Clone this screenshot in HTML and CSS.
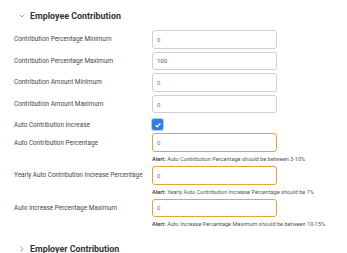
FILE: index.html
```html
<!DOCTYPE html>
<html>
<head>
<meta charset="utf-8">
<link rel="stylesheet" href="styles.css">
</head>
<body>
<div class="page">
  <div class="section-head">
    <svg class="chev" width="6" height="4" viewBox="0 0 6 4"><path d="M0.6 0.6 L3 3 L5.4 0.6" fill="none" stroke="#9aa0a6" stroke-width="0.9"/></svg>
    <span class="title">Employee Contribution</span>
  </div>
  <div class="form">
    <div class="row">
      <label class="label">Contribution Percentage Minimum</label>
      <div class="field"><div class="input">0</div></div>
    </div>
    <div class="row">
      <label class="label">Contribution Percentage Maximum</label>
      <div class="field"><div class="input dark">100</div></div>
    </div>
    <div class="row">
      <label class="label">Contribution Amount Minimum</label>
      <div class="field"><div class="input">0</div></div>
    </div>
    <div class="row">
      <label class="label">Contribution Amount Maximum</label>
      <div class="field"><div class="input">0</div></div>
    </div>
    <div class="row check-row">
      <label class="label">Auto Contribution Increase</label>
      <div class="field">
        <span class="checkbox"><svg width="8" height="8" viewBox="0 0 8 8"><path d="M1.6 4.2 L3.3 5.8 L6.5 2.2" fill="none" stroke="#fff" stroke-width="1.2"/></svg></span>
      </div>
    </div>
    <div class="row">
      <label class="label">Auto Contribution Percentage</label>
      <div class="field"><div class="input warn">0</div></div>
    </div>
    <div class="alert"><b>Alert:</b> Auto Contribution Percentage should be between 3-10%</div>
    <div class="row">
      <label class="label">Yearly Auto Contribution Increase Percentage</label>
      <div class="field"><div class="input warn">0</div></div>
    </div>
    <div class="alert"><b>Alert:</b> Yearly Auto Contribution Increase Percentage should be 1%</div>
    <div class="row">
      <label class="label">Auto Increase Percentage Maximum</label>
      <div class="field"><div class="input warn">0</div></div>
    </div>
    <div class="alert"><b>Alert:</b> Auto Increase Percentage Maximum should be between 10-15%</div>
  </div>
  <div class="section-head second">
    <svg class="chev" width="4" height="6" viewBox="0 0 4 6"><path d="M0.6 0.6 L3 3 L0.6 5.4" fill="none" stroke="#9aa0a6" stroke-width="0.9"/></svg>
    <span class="title">Employer Contribution</span>
  </div>
</div>
</body>
</html>
```
FILE: styles.css
```css
* { box-sizing: border-box; }
body {
  margin: 0;
  background: #fff;
  font-family: Roboto, "Liberation Sans", sans-serif;
  color: #444;
}
.page {
  padding: 9px 0 0 14px;
  width: 347px;
}
.section-head {
  display: flex;
  align-items: center;
  height: 14px;
  padding-left: 5px;
}
.chev { flex: none; }
.section-head .title {
  margin-left: 5px;
  font-size: 8.9px;
  font-weight: 700;
  color: #333;
}
.section-head.second {
  margin-top: 11px;
  padding-left: 6px;
}
.section-head.second .title { margin-left: 6px; }
.form {
  display: flex;
  flex-direction: column;
  margin-top: 7px;
}
.row {
  display: grid;
  grid-template-columns: 138px 125px;
  align-items: center;
  margin-bottom: 3px;
}
.label {
  font-size: 6.4px;
  color: #484848;
}
.input {
  height: 18.6px;
  border: 1px solid #cfcfcf;
  border-radius: 3px;
  padding-left: 4px;
  display: flex;
  align-items: center;
  font-size: 6px;
  color: #777;
}
.input.dark { color: #555; }
.input.warn { border-color: #e6a33c; }
.check-row { margin-top: 3px; margin-bottom: 3px; }
.checkbox {
  display: flex;
  align-items: center;
  justify-content: center;
  width: 11px;
  height: 11px;
  border-radius: 2px;
  background: #2f7ee0;
  box-shadow: 0 0 0 1px #a9cdf5;
}
.alert {
  margin: 0 0 3px 138px;
  font-size: 5.6px;
  line-height: 8px;
  color: #555;
}
.alert b { font-weight: 600; color: #444; }
```
